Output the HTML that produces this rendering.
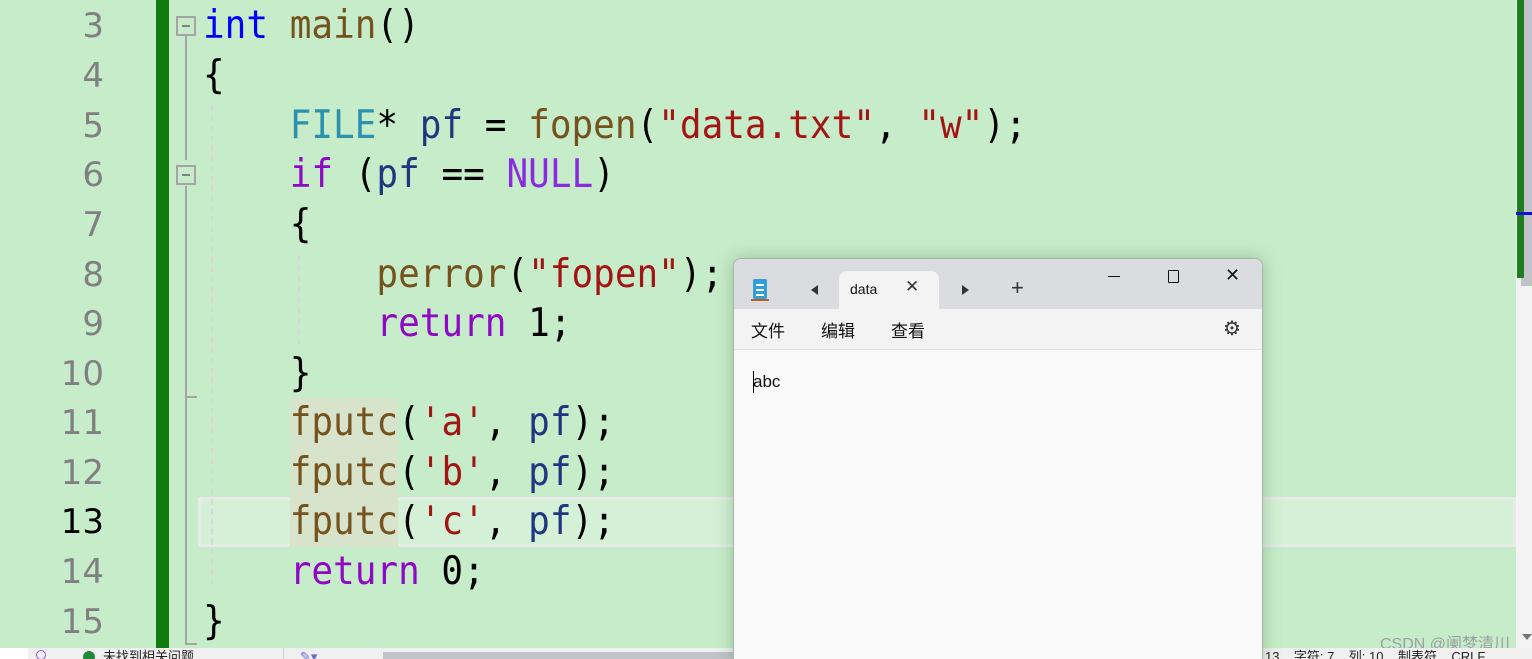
<!DOCTYPE html>
<html><head><meta charset="utf-8"><style>
*{margin:0;padding:0;box-sizing:border-box}
html,body{width:1532px;height:659px;overflow:hidden}
body{background:#c7ecc9;position:relative;font-family:"Liberation Sans","Noto Sans CJK SC",sans-serif}
.ln{position:absolute;right:1428px;width:100px;text-align:right;font-family:"DejaVu Sans",sans-serif;font-size:34px;color:#808080;line-height:50px}
.code{position:absolute;left:203px;font-family:"DejaVu Sans Mono",monospace;font-size:36px;line-height:50px;white-space:pre;color:#000;transform:scaleY(1.08);transform-origin:0 0}
.k{color:#0000ff}.f{color:#74531f}.t{color:#2b91af}.v{color:#1f377f}.s{color:#a31515}.p{color:#8f08c4}.m{color:#8a2be2}
.abs{position:absolute}
</style></head><body>
<div class="abs" style="left:198px;top:497px;width:1318px;height:50px;border:3px solid #e6ebe8;background:#d4f0d6"></div>
<div class="abs" style="left:290px;top:398px;width:108px;height:149px;background:#d8e3cb"></div>
<div class="abs" style="left:156px;top:0;width:13px;height:648px;background:#107c10"></div>
<div class="abs" style="left:185px;top:36px;width:2px;height:124px;background:#a5a5a5"></div>
<div class="abs" style="left:185px;top:186px;width:2px;height:458px;background:#a5a5a5"></div>
<div class="abs" style="left:185px;top:643px;width:12px;height:2px;background:#a5a5a5"></div>
<div class="abs" style="left:185px;top:396px;width:12px;height:2px;background:#a5a5a5"></div>
<div class="abs" style="left:176px;top:16px;width:20px;height:20px;border:2px solid #a5a5a5;background:#c7ecc9"><div class="abs" style="left:4px;top:7px;width:8px;height:2px;background:#808080"></div></div>
<div class="abs" style="left:176px;top:165px;width:20px;height:20px;border:2px solid #a5a5a5;background:#c7ecc9"><div class="abs" style="left:4px;top:7px;width:8px;height:2px;background:#808080"></div></div>
<div class="abs" style="left:211px;top:105px;width:0;height:480px;border-left:2px dashed #dcd6dc"></div>
<div class="abs" style="left:298px;top:255px;width:0;height:90px;border-left:2px dashed #dcd6dc"></div>
<div class="ln" style="top:1px">3</div>
<div class="ln" style="top:51px">4</div>
<div class="ln" style="top:101px">5</div>
<div class="ln" style="top:150px">6</div>
<div class="ln" style="top:200px">7</div>
<div class="ln" style="top:250px">8</div>
<div class="ln" style="top:299px">9</div>
<div class="ln" style="top:349px">10</div>
<div class="ln" style="top:398px">11</div>
<div class="ln" style="top:448px">12</div>
<div class="ln" style="top:497px;color:#000">13</div>
<div class="ln" style="top:547px">14</div>
<div class="ln" style="top:597px">15</div>
<div class="code" style="top:-1px"><span class="k">int</span> <span class="f">main</span>()</div>
<div class="code" style="top:49px">{</div>
<div class="code" style="top:99px">    <span class="t">FILE</span>* <span class="v">pf</span> = <span class="f">fopen</span>(<span class="s">"data.txt"</span>, <span class="s">"w"</span>);</div>
<div class="code" style="top:148px">    <span class="p">if</span> (<span class="v">pf</span> == <span class="m">NULL</span>)</div>
<div class="code" style="top:198px">    {</div>
<div class="code" style="top:248px">        <span class="f">perror</span>(<span class="s">"fopen"</span>);</div>
<div class="code" style="top:297px">        <span class="p">return</span> 1;</div>
<div class="code" style="top:347px">    }</div>
<div class="code" style="top:396px">    <span class="f">fputc</span>(<span class="s">'a'</span>, <span class="v">pf</span>);</div>
<div class="code" style="top:446px">    <span class="f">fputc</span>(<span class="s">'b'</span>, <span class="v">pf</span>);</div>
<div class="code" style="top:495px">    <span class="f">fputc</span>(<span class="s">'c'</span>, <span class="v">pf</span>);</div>
<div class="code" style="top:545px">    <span class="p">return</span> 0;</div>
<div class="code" style="top:595px">}</div>
<div class="abs" style="left:1516px;top:0;width:16px;height:648px;background:#f3f3f3"></div>
<div class="abs" style="left:1521px;top:0;width:11px;height:286px;background:#c2c3c9"></div>
<div class="abs" style="left:1517px;top:0;width:7px;height:278px;background:#1e7e1e"></div>
<div class="abs" style="left:1516px;top:212px;width:16px;height:3px;background:#1010d0"></div>
<div class="abs" style="left:1380px;top:630px;font-size:16px;color:#9aa0a0">CSDN @阑梦清川</div>
<div class="abs" style="left:1522px;top:634px;width:0;height:0;border-left:5px solid transparent;border-right:5px solid transparent;border-top:6px solid #777"></div>
<div class="abs" style="left:0;top:648px;width:1532px;height:11px;background:#f0f0f0;overflow:hidden;font-size:13px;line-height:18px;color:#222">
<div class="abs" style="left:0;top:0;width:28px;height:11px;background:#fff"></div>
<span class="abs" style="left:36px;top:2px;width:10px;height:10px;border:1px solid #8a5ec8;border-radius:50%"></span>
<span class="abs" style="left:83px;top:3px;width:12px;height:12px;background:#1e8a3a;border-radius:50%"></span>
<span class="abs" style="left:103px;top:0">未找到相关问题</span>
<div class="abs" style="left:283px;top:0;width:1px;height:11px;background:#ccc"></div>
<span class="abs" style="left:300px;top:0;color:#6a6ad0">✎▾</span>
<div class="abs" style="left:383px;top:4px;width:350px;height:7px;background:#c2c3c9"></div>
<span class="abs" style="left:1265px;top:0">13&nbsp;&nbsp;&nbsp;&nbsp;字符: 7&nbsp;&nbsp;&nbsp;&nbsp;列: 10&nbsp;&nbsp;&nbsp;&nbsp;制表符&nbsp;&nbsp;&nbsp;&nbsp;CRLF</span>
</div>
<div class="abs" style="left:733px;top:258px;width:530px;height:410px;border-radius:8px 8px 0 0;background:#f9f9f9;border:1px solid #a9b4a9;overflow:hidden;box-shadow:0 0 18px rgba(60,110,60,.35)">
 <div class="abs" style="left:0;top:0;width:530px;height:50px;background:#dadce0"></div>
 <div class="abs" style="left:105px;top:12px;width:100px;height:40px;background:#f3f3f3;border-radius:8px 8px 0 0"></div>
 <div class="abs" style="left:19px;top:20px;width:14px;height:20px;background:#2f9fd6;border-radius:2px"></div>
 <div class="abs" style="left:22px;top:25px;width:8px;height:2px;background:#fff"></div>
 <div class="abs" style="left:22px;top:30px;width:8px;height:2px;background:#fff"></div>
 <div class="abs" style="left:22px;top:35px;width:8px;height:2px;background:#fff"></div>
 <div class="abs" style="left:17px;top:40px;width:18px;height:2px;background:#c05a1c"></div>
 <div class="abs" style="left:77px;top:26px;width:0;height:0;border-top:5px solid transparent;border-bottom:5px solid transparent;border-right:7px solid #333"></div>
 <div class="abs" style="left:228px;top:26px;width:0;height:0;border-top:5px solid transparent;border-bottom:5px solid transparent;border-left:7px solid #333"></div>
 <div class="abs" style="left:116px;top:22px;font-size:14px;color:#111">data</div>
 <div class="abs" style="left:171px;top:18px;font-size:17px;color:#333;font-weight:300">✕</div>
 <div class="abs" style="left:277px;top:16px;font-size:22px;color:#333;font-weight:300">+</div>
 <div class="abs" style="left:374px;top:17px;width:12px;height:1px;background:#111"></div>
 <div class="abs" style="left:434px;top:11px;width:11px;height:13px;border:1px solid #111;border-radius:1px"></div>
 <div class="abs" style="left:491px;top:6px;font-size:18px;color:#111;font-weight:300">✕</div>
 <div class="abs" style="left:0;top:50px;width:530px;height:41px;background:#f3f3f3;border-bottom:1px solid #e3e3e3"></div>
 <div class="abs" style="left:17px;top:58px;font-size:17px;color:#111">文件</div>
 <div class="abs" style="left:87px;top:58px;font-size:17px;color:#111">编辑</div>
 <div class="abs" style="left:157px;top:58px;font-size:17px;color:#111">查看</div>
 <div class="abs" style="left:489px;top:57px;font-size:20px;color:#333">⚙</div>
 <div class="abs" style="left:19px;top:112px;width:1px;height:22px;background:#000"></div>
 <div class="abs" style="left:19px;top:113px;font-size:17px;color:#111">abc</div>
</div>
</body></html>
